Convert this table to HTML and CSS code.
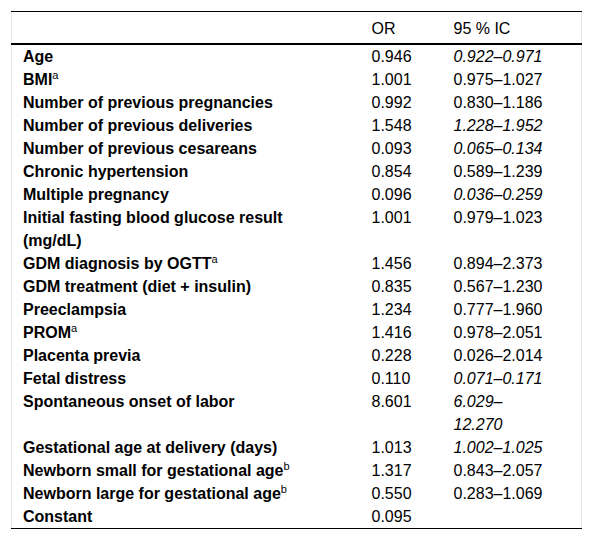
FILE: index.html
```html
<!DOCTYPE html>
<html>
<head>
<meta charset="utf-8">
<link rel="stylesheet" href="styles.css">
</head>
<body>
<div class="wrap">
<table class="tbl">
<colgroup><col class="c1"><col class="c2"><col class="c3"></colgroup>
<thead>
<tr><th></th><th>OR</th><th>95 % IC</th></tr>
</thead>
<tbody>
<tr><td class="lbl">Age</td><td>0.946</td><td><i>0.922–0.971</i></td></tr>
<tr><td class="lbl">BMI<sup>a</sup></td><td>1.001</td><td>0.975–1.027</td></tr>
<tr><td class="lbl">Number of previous pregnancies</td><td>0.992</td><td>0.830–1.186</td></tr>
<tr><td class="lbl">Number of previous deliveries</td><td>1.548</td><td><i>1.228–1.952</i></td></tr>
<tr><td class="lbl">Number of previous cesareans</td><td>0.093</td><td><i>0.065–0.134</i></td></tr>
<tr><td class="lbl">Chronic hypertension</td><td>0.854</td><td>0.589–1.239</td></tr>
<tr><td class="lbl">Multiple pregnancy</td><td>0.096</td><td><i>0.036–0.259</i></td></tr>
<tr><td class="lbl">Initial fasting blood glucose result (mg/dL)</td><td>1.001</td><td>0.979–1.023</td></tr>
<tr><td class="lbl">GDM diagnosis by OGTT<sup>a</sup></td><td>1.456</td><td>0.894–2.373</td></tr>
<tr><td class="lbl">GDM treatment (diet + insulin)</td><td>0.835</td><td>0.567–1.230</td></tr>
<tr><td class="lbl">Preeclampsia</td><td>1.234</td><td>0.777–1.960</td></tr>
<tr><td class="lbl">PROM<sup>a</sup></td><td>1.416</td><td>0.978–2.051</td></tr>
<tr><td class="lbl">Placenta previa</td><td>0.228</td><td>0.026–2.014</td></tr>
<tr><td class="lbl">Fetal distress</td><td>0.110</td><td><i>0.071–0.171</i></td></tr>
<tr><td class="lbl">Spontaneous onset of labor</td><td>8.601</td><td><i>6.029–<br>12.270</i></td></tr>
<tr><td class="lbl">Gestational age at delivery (days)</td><td>1.013</td><td><i>1.002–1.025</i></td></tr>
<tr><td class="lbl">Newborn small for gestational age<sup>b</sup></td><td>1.317</td><td>0.843–2.057</td></tr>
<tr><td class="lbl">Newborn large for gestational age<sup>b</sup></td><td>0.550</td><td>0.283–1.069</td></tr>
<tr><td class="lbl">Constant</td><td>0.095</td><td></td></tr>
</tbody>
</table>
</div>
</body>
</html>
```
FILE: styles.css
```css
html, body {
  margin: 0;
  padding: 0;
  background: #fff;
}
.wrap {
  padding: 11px 11px 0 11px;
}
.tbl {
  width: 570px;
  border-collapse: collapse;
  table-layout: fixed;
  font-family: "Liberation Sans", Arial, sans-serif;
  font-size: 16px;
  color: #000;
  border-left: 1px solid #e8e8e8;
  border-right: 1px solid #e8e8e8;
  border-bottom: 1px solid #000;
}
.c1 { width: 349px; }
.c2 { width: 82px; }
.c3 { width: 139px; }
.tbl thead tr {
  border-top: 1px solid #000;
  border-bottom: 2px solid #000;
}
.tbl th {
  font-weight: normal;
  text-align: left;
  padding: 5px 11px 3px 11px;
  line-height: 23px;
  vertical-align: top;
}
.tbl td {
  padding: 0 11px;
  line-height: 23px;
  vertical-align: top;
  text-align: left;
  white-space: nowrap;
}
.tbl td.lbl {
  font-weight: bold;
  padding-right: 50px;
  white-space: normal;
}
.tbl sup {
  font-weight: normal;
  font-size: 11px;
  line-height: 0;
  vertical-align: 6px;
}
```
